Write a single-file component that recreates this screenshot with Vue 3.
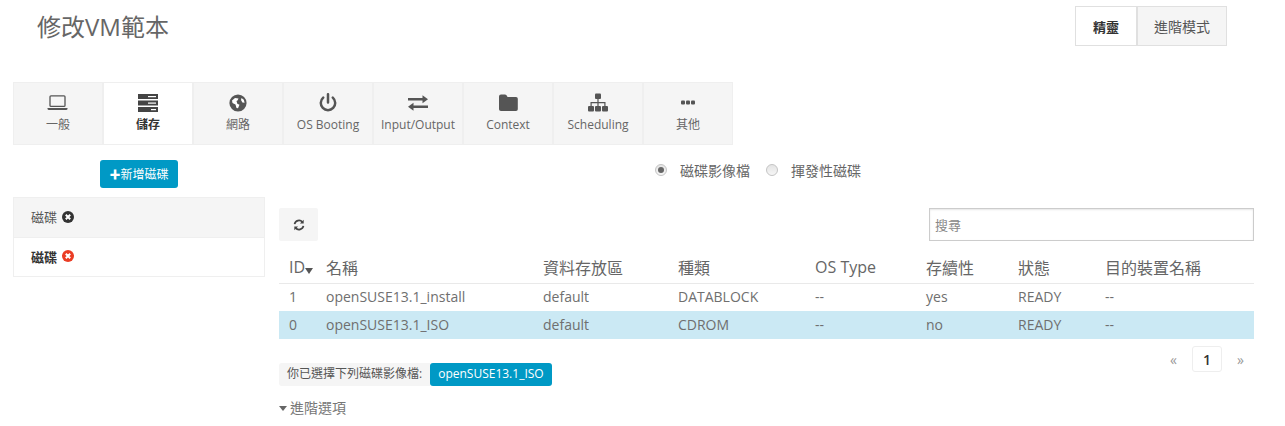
<script setup>
const tabs = [
  { label: '一般', icon: 'laptop' },
  { label: '儲存', icon: 'storage', active: true },
  { label: '網路', icon: 'globe' },
  { label: 'OS Booting', icon: 'power' },
  { label: 'Input/Output', icon: 'exchange' },
  { label: 'Context', icon: 'folder' },
  { label: 'Scheduling', icon: 'sitemap' },
  { label: '其他', icon: 'dots' }
]
const columns = ['ID', '名稱', '資料存放區', '種類', 'OS Type', '存續性', '狀態', '目的裝置名稱']
const widths = [37, 217, 135, 137, 111, 92, 87, 159]
const rows = [
  { cells: ['1', 'openSUSE13.1_install', 'default', 'DATABLOCK', '--', 'yes', 'READY', '--'] },
  { cells: ['0', 'openSUSE13.1_ISO', 'default', 'CDROM', '--', 'no', 'READY', '--'], selected: true }
]
</script>

<template>
  <div class="page">
    <header class="header">
      <h1 class="title">修改VM範本</h1>
      <div class="mode">
        <button class="mode-btn on">精靈</button>
        <button class="mode-btn">進階模式</button>
      </div>
    </header>

    <nav class="tabs">
      <div v-for="t in tabs" :key="t.label" class="tab" :class="{ active: t.active }">
        <svg class="tab-icon" viewBox="0 0 24 20" width="24" height="20">
          <g v-if="t.icon === 'laptop'">
            <rect x="4" y="2.8" width="15" height="10.6" rx="1" fill="none" stroke="#555" stroke-width="1.3" />
            <path d="M1.5 15h20v.7q0 1.3-1.5 1.3H3q-1.5 0-1.5-1.3z" fill="#555" />
          </g>
          <g v-else-if="t.icon === 'storage'">
            <rect x="2" y="1" width="20" height="5" fill="#444" />
            <rect x="2" y="7.5" width="20" height="5" fill="#444" />
            <rect x="2" y="14" width="20" height="5" fill="#444" />
            <rect x="12" y="3" width="8" height="1.2" fill="#fff" />
            <rect x="12" y="9.5" width="8" height="1.2" fill="#fff" />
            <rect x="15" y="16" width="5" height="1.2" fill="#fff" />
          </g>
          <g v-else-if="t.icon === 'globe'">
            <circle cx="12" cy="10" r="8.6" fill="#555" />
            <path d="M6 7.5l3-2.5 3.5.5-1 2-1 .5.8 2.7 2.2 1-1.5 3.5-1.5-.3-1-3.4-3-1.5zM15.5 5l2.3 1.8.8 3-2.2-.4-1.4-2.3z" fill="#fff" />
          </g>
          <path v-else-if="t.icon === 'power'" d="M12 1.2v8.4M7.2 4.6a7.2 7.2 0 1 0 9.6 0" fill="none" stroke="#555" stroke-width="2.5" stroke-linecap="round" />
          <g v-else-if="t.icon === 'exchange'" fill="#555">
            <path d="M2 5h14.5V2.2l5.5 4-5.500 4V7.500H2z" />
            <path d="M22 12.500H7.500V9.700l-5.500 4 5.500 4V15H22z" />
          </g>
          <path v-else-if="t.icon === 'folder'" d="M3 3.500Q3 1.500 5 1.500h4q1.500 0 2 1.500l.5 1H20q1.800 0 1.800 1.800v10.400q0 1.800-1.800 1.800H5q-2 0-2-1.800z" fill="#555" />
          <g v-else-if="t.icon === 'sitemap'" fill="#555">
            <rect x="9" y="0.500" width="6" height="5.500" rx="1" />
            <rect x="2" y="13" width="6" height="5.500" rx="1" />
            <rect x="9" y="13" width="6" height="5.500" rx="1" />
            <rect x="16" y="13" width="6" height="5.500" rx="1" />
            <path d="M11.400 6h1.200v3h6.900v4h-1.200v-2.800h-5.700V13h-1.200v-2.800H5.700V13H4.500V9h6.900z" />
          </g>
          <g v-else fill="#555">
            <rect x="5" y="7.500" width="4" height="4" rx="1" />
            <rect x="10" y="7.500" width="4" height="4" rx="1" />
            <rect x="15" y="7.500" width="4" height="4" rx="1" />
          </g>
        </svg>
        <span class="tab-label">{{ t.label }}</span>
      </div>
    </nav>

    <div class="content">
      <aside class="side">
        <div class="add-wrap">
          <button class="add-btn"><span class="plus">✚</span>新增磁碟</button>
        </div>
        <ul class="disks">
          <li class="disk">磁碟
            <svg class="x" viewBox="0 0 12 12" width="12" height="12"><circle cx="6" cy="6" r="6" fill="#333" /><path d="M3.800 3.800l4.400 4.400M8.200 3.800l-4.400 4.400" stroke="#fff" stroke-width="2" /></svg>
          </li>
          <li class="disk on">磁碟
            <svg class="x" viewBox="0 0 12 12" width="12" height="12"><circle cx="6" cy="6" r="6" fill="#ea3d25" /><path d="M3.800 3.800l4.400 4.400M8.200 3.800l-4.400 4.400" stroke="#fff" stroke-width="2" /></svg>
          </li>
        </ul>
      </aside>

      <section class="main">
        <div class="radios">
          <span class="radio checked"></span><span class="radio-label">磁碟影像檔</span>
          <span class="radio"></span><span class="radio-label">揮發性磁碟</span>
        </div>
        <div class="tools">
          <button class="refresh">
            <svg viewBox="0 0 14 14" width="12" height="12" fill="none" stroke="#444" stroke-width="2">
              <path d="M1.800 6A5.300 5.300 0 0 1 11 3.600" />
              <path d="M12.200 8A5.300 5.300 0 0 1 3 10.400" />
              <path d="M12.500 .8v4.400H8.100z" fill="#444" stroke="none" />
              <path d="M1.500 13.200V8.800h4.400z" fill="#444" stroke="none" />
            </svg>
          </button>
          <input class="search" placeholder="搜尋" />
        </div>
        <table class="table">
          <colgroup><col v-for="(w, i) in widths" :key="i" :style="{ width: w + 'px' }" /></colgroup>
          <thead>
            <tr>
              <th v-for="(c, i) in columns" :key="c">{{ c }}<span v-if="i === 0" class="caret"></span></th>
            </tr>
          </thead>
          <tbody>
            <tr v-for="r in rows" :key="r.cells[0]" :class="{ sel: r.selected }">
              <td v-for="(c, i) in r.cells" :key="i">{{ c }}</td>
            </tr>
          </tbody>
        </table>
        <div class="foot">
          <div class="selected-info">
            <span class="sel-label">你已選擇下列磁碟影像檔:</span><span class="sel-value">openSUSE13.1_ISO</span>
          </div>
          <div class="pager">
            <span class="arrow">«</span>
            <span class="page-num">1</span>
            <span class="arrow">»</span>
          </div>
        </div>
        <div class="advanced"><span class="adv-caret"></span>進階選項</div>
      </section>
    </div>
  </div>
</template>

<style scoped>
.page {
  width: 1285px;
  height: 426px;
  overflow: hidden;
  background: #fff;
  color: #666;
  font-family: "Open Sans", "Noto Sans CJK TC", sans-serif;
  box-sizing: border-box;
}
.header {
  height: 82px;
  display: flex;
  justify-content: space-between;
  align-items: flex-start;
  padding: 7px 58px 0 37px;
  box-sizing: border-box;
}
.title {
  margin: 0;
  font-size: 24px;
  font-weight: 400;
  line-height: 39px;
  color: #666;
}
.mode { display: flex; margin-top: -1px; }
.mode-btn {
  height: 40px;
  box-sizing: border-box;
  border: 1px solid #e0e0e0;
  background: #f5f5f5;
  color: #555;
  font: 400 14px "Open Sans", "Noto Sans CJK TC", sans-serif;
  padding: 0;
  width: 90px;
}
.mode-btn.on {
  background: #fff;
  font-weight: 700;
  font-size: 13px;
  width: 62px;
  color: #333;
}
.tabs {
  display: flex;
  margin-left: 13px;
  width: 720px;
  height: 63px;
}
.tab {
  width: 90px;
  box-sizing: border-box;
  border: 1px solid #efefef;
  background: #f5f5f5;
  display: flex;
  flex-direction: column;
  align-items: center;
  padding-top: 10px;
  color: #666;
}
.tab.active {
  background: #fff;
  font-weight: 700;
  color: #333;
}
.tab-icon { display: block; }
.tab-label {
  font-size: 12px;
  line-height: 16px;
  margin-top: 4px;
  white-space: nowrap;
}
.content {
  display: flex;
  padding-left: 13px;
}
.side { width: 252px; margin-right: 14px; }
.add-wrap {
  display: flex;
  justify-content: center;
  padding-top: 15px;
  height: 52px;
  box-sizing: border-box;
}
.add-btn {
  width: 78px;
  height: 28px;
  padding: 0;
  border: 0;
  border-radius: 3px;
  background: #0099c5;
  color: #fff;
  font: 400 12px "Open Sans", "Noto Sans CJK TC", sans-serif;
  white-space: nowrap;
}
.plus { font-size: 11px; }
.disks { list-style: none; margin: 0; padding: 0; }
.disk {
  height: 41px;
  box-sizing: border-box;
  border: 1px solid #efefef;
  background: #f5f5f5;
  display: flex;
  align-items: center;
  gap: 5px;
  padding: 0 0 2px 17px;
  font-size: 13px;
  color: #555;
}
.disk.on { background: #fff; font-weight: 700; color: #333; border-top-width: 0; height: 39px; }
.x { display: block; }
.main { width: 975px; }
.radios {
  height: 63px;
  padding-top: 15px;
  box-sizing: border-box;
  display: flex;
  align-items: flex-start;
  padding-left: 376px;
  font-size: 14px;
  line-height: 22px;
  color: #666;
}
.radio {
  width: 12px;
  height: 12px;
  box-sizing: border-box;
  border-radius: 50%;
  border: 1px solid #c4c4c4;
  background: linear-gradient(#e4e4e4, #f6f6f6);
  margin: 4px 13px 0 0;
  position: relative;
}
.radio.checked::after {
  content: "";
  position: absolute;
  left: 2px;
  top: 2px;
  width: 6px;
  height: 6px;
  border-radius: 50%;
  background: #666;
}
.radio-label { margin-right: 16px; }
.tools {
  display: flex;
  justify-content: space-between;
  height: 33px;
}
.refresh {
  width: 39px;
  height: 33px;
  padding: 0;
  border: 0;
  border-radius: 2px;
  background: #f5f5f5;
  display: flex;
  align-items: center;
  justify-content: center;
}
.search {
  width: 325px;
  height: 33px;
  box-sizing: border-box;
  border: 1px solid #ccc;
  box-shadow: inset 0 1px 2px rgba(0, 0, 0, .1);
  padding: 0 5px;
  font: 400 13px "Open Sans", "Noto Sans CJK TC", sans-serif;
  outline: none;
}
.search::placeholder { color: #888; }
.table {
  width: 975px;
  table-layout: fixed;
  border-collapse: collapse;
  margin-top: 14px;
}
th {
  height: 28px;
  box-sizing: border-box;
  text-align: left;
  padding: 0 0 3px 10px;
  font-size: 16px;
  font-weight: 400;
  color: #666;
  border-bottom: 1px solid #e9e9e9;
  white-space: nowrap;
}
td {
  height: 28px;
  box-sizing: border-box;
  padding: 0 0 2px 10px;
  font-size: 14px;
  color: #6f6f6f;
  white-space: nowrap;
}
.sel td { background: #cbe9f4; }
.caret {
  display: inline-block;
  width: 0;
  height: 0;
  border: 4px solid transparent;
  border-top: 6px solid #555;
  border-bottom: 0;
  margin-left: 0;
  vertical-align: -1px;
}
.foot {
  display: flex;
  justify-content: space-between;
  align-items: flex-start;
  padding-top: 7px;
  height: 47px;
  box-sizing: border-box;
}
.selected-info { display: flex; margin-top: 17px; }
.sel-label {
  height: 23px;
  line-height: 22px;
  padding: 0 8px;
  background: #f5f5f5;
  border-radius: 3px 0 0 3px;
  font-size: 12px;
  color: #555;
}
.sel-value {
  height: 23px;
  line-height: 22px;
  padding: 0 8px;
  background: #0099c5;
  color: #fff;
  border-radius: 3px;
  font-size: 12px;
}
.pager {
  display: flex;
  align-items: center;
  margin-right: 10px;
}
.arrow { font-size: 14px; color: #999; }
.page-num {
  width: 30px;
  height: 26px;
  line-height: 26px;
  box-sizing: border-box;
  border: 1px solid #eee;
  border-radius: 3px;
  text-align: center;
  font-size: 14px;
  font-weight: 600;
  color: #333;
  margin: 0 15px;
}
.advanced {
  margin-top: 12px;
  font-size: 14px;
  line-height: 20px;
  color: #777;
  display: flex;
  align-items: center;
}
.adv-caret {
  width: 0;
  height: 0;
  border: 4.500px solid transparent;
  border-top: 5px solid #666;
  border-bottom: 0;
  margin-right: 3px;
}
</style>
